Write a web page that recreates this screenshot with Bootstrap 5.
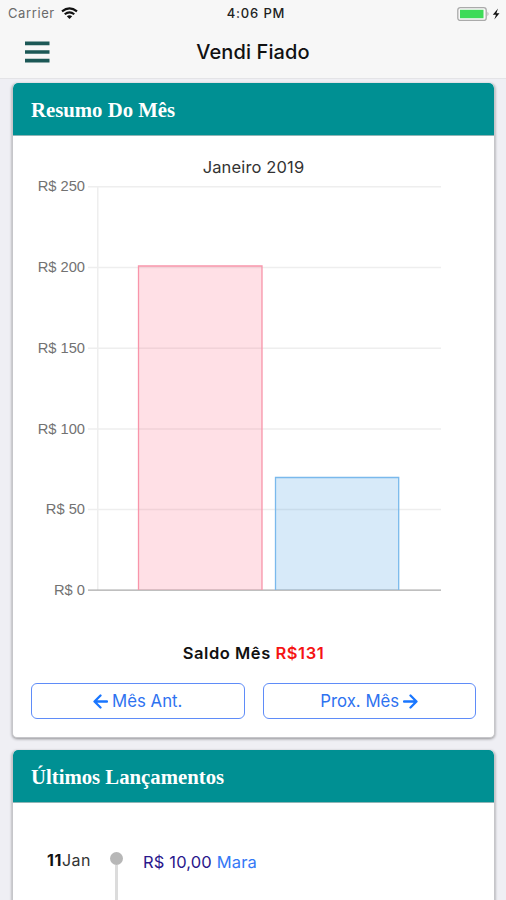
<!DOCTYPE html>
<html lang="pt-BR">
<head>
<meta charset="utf-8">
<meta name="viewport" content="width=device-width, initial-scale=1">
<title>Vendi Fiado</title>
<link href="https://cdn.jsdelivr.net/npm/bootstrap@5.3.0/dist/css/bootstrap.min.css" rel="stylesheet">
<style>
body{font-family:Inter,"Liberation Sans",sans-serif;background:#efeff4;color:#111;height:900px;overflow:hidden}
main{height:821px;overflow:hidden}
.app-top{background:#f7f7f7;height:79px;border-bottom:1px solid #e4e4e7}
.status{height:26px;font-size:13px;padding:1px 5px 0 8px;display:grid;grid-template-columns:1fr auto 1fr}
.carrier{color:#6a6a6a;letter-spacing:.6px}
.carrier svg{margin-left:6px}
.clock{font-weight:500;letter-spacing:.85px;color:#222;padding-left:3px}
.title-bar{height:52px;display:grid;grid-template-columns:1fr auto 1fr;padding:0 24px}
.title{font-size:20px;font-weight:500;color:#111;letter-spacing:.1px;margin:0}
.panel{width:483px;margin-left:12px;border:1px solid #c6c6ca;border-top:0;border-radius:5px;box-shadow:0 1px 3px rgba(0,0,0,.4);overflow:hidden}
.panel-title{height:53px;background:#009093;color:#fff;font:bold 20.75px "Liberation Serif",serif;padding:2px 18px 0;border-bottom:1px solid #8fb5b6;border-radius:5px 5px 0 0}
.summary{height:655px;margin-top:4px}
.entries{height:230px;margin-top:12px}
.chart-title{font-size:16.5px;line-height:20px;color:#333;padding-top:21px;letter-spacing:.15px}
.axis{font:14.7px "Liberation Sans",sans-serif;fill:#727272;text-anchor:end}
.balance{font-size:16.5px;font-weight:600;line-height:22px;letter-spacing:.55px;color:#111}
.balance span{color:#f51414}
.months{padding:19px 18px 0;gap:18px}
.btn-month{height:36px;border:1px solid #5f8cf8;border-radius:6px;color:#2e72f0;font-size:16.8px;padding:0;gap:4px;line-height:1}
.entry{padding:37px 0 0 34px;font-size:16.5px}
.day{width:63px;font-size:16px;letter-spacing:.55px;line-height:41px;color:#333}
.day b{color:#111}
.track{width:13px;height:90px;padding-top:12px}
.dot{width:13px;height:13px;border-radius:50%;background:#b7b7b7;flex:none}
.rail{width:3px;background:#dcdcdc}
.amount{color:#2a178c;line-height:45px;margin-left:20px;letter-spacing:.15px}
.amount a{color:#3478f6}
</style>
<script src="https://cdn.jsdelivr.net/npm/bootstrap@5.3.0/dist/js/bootstrap.bundle.min.js"></script>
</head>
<body>
<header class="app-top">
  <div class="status align-items-center">
    <div class="carrier d-flex align-items-center">Carrier
      <svg width="17" height="13" viewBox="0 0 17 13" fill="none" stroke="#111" stroke-width="2.1"><path d="M1 4.4Q8.5-1.8 16 4.4M3.7 7.3Q8.5 3.4 13.3 7.3"/><path d="M5.8 9.2Q8.5 7.2 11.2 9.2L8.5 12Z" fill="#111" stroke="none"/></svg>
    </div>
    <div class="clock">4:06 PM</div>
    <div class="d-flex justify-content-end align-items-center">
      <svg width="44" height="16" viewBox="0 0 44 16"><rect x=".8" y="1.6" width="28.4" height="12.8" rx="2.5" fill="#f7f7f7" stroke="#aaa" stroke-width="1.3"/><rect x="3" y="3.8" width="23.5" height="8.4" fill="#3edb58"/><path d="M30.5 5.8q2 2.2 0 4.4z" fill="#aaa"/><path d="M41 2.5L35.8 8.8H39L37.3 13.5L42.5 7.2H39.4Z" fill="#111"/></svg>
    </div>
  </div>
  <nav class="title-bar align-items-center">
    <svg width="26" height="24" viewBox="0 0 26 24" stroke="#1c5856" stroke-width="3.6"><path d="M1 3.4H25.5M1 12H25.5M1 20.6H25.5"/></svg>
    <h1 class="title">Vendi Fiado</h1>
  </nav>
</header>
<main class="d-flow-root">
  <div class="pt-1">
  <section class="card panel summary mt-0">
    <h2 class="panel-title d-flex align-items-center mb-0 flex-shrink-0">Resumo Do Mês</h2>
    <div class="chart-title text-center">Janeiro 2019</div>
    <svg class="d-block" width="481" height="465" viewBox="13 177 481 465" role="img" aria-label="Janeiro 2019">
      <g stroke="#eee" stroke-width="1.5"><path d="M88 186.7H441M88 267.5H441M88 348.3H441M88 428.9H441M88 509.5H441M97.8 186V590"/></g>
      <path d="M88 590.2H441" stroke="#aaa" stroke-width="1.3"/>
      <g fill="rgba(255,99,132,.2)" stroke="#f895aa" stroke-width="1.3"><path d="M138.5 590V266H262V590"/></g>
      <g fill="rgba(54,150,225,.2)" stroke="#7ab9ec" stroke-width="1.3"><path d="M275.5 590V477.5H398.7V590"/></g>
      <g class="axis"><text x="85" y="191.3">R$ 250</text><text x="85" y="272.3">R$ 200</text><text x="85" y="353">R$ 150</text><text x="85" y="433.6">R$ 100</text><text x="85" y="514.4">R$ 50</text><text x="85" y="595">R$ 0</text></g>
    </svg>
    <div class="balance text-center">Saldo Mês <span>R$131</span></div>
    <div class="months d-flex">
      <button class="btn btn-month flex-fill w-50 d-flex align-items-center justify-content-center"><svg width="15" height="15" viewBox="0 0 15 15" fill="none" stroke="#1976ff" stroke-width="2.3" stroke-linecap="round" stroke-linejoin="round"><path d="M7.5 1.5L1.5 7.5L7.5 13.5M2 7.5H14"/></svg><span>Mês Ant.</span></button>
      <button class="btn btn-month flex-fill w-50 d-flex align-items-center justify-content-center"><span>Prox. Mês</span><svg width="15" height="15" viewBox="0 0 15 15" fill="none" stroke="#1976ff" stroke-width="2.3" stroke-linecap="round" stroke-linejoin="round"><path d="M7.5 1.5L13.5 7.5L7.5 13.5M13 7.5H1"/></svg></button>
    </div>
  </section>
  <section class="card panel entries">
    <h2 class="panel-title d-flex align-items-center mb-0 flex-shrink-0">Últimos Lançamentos</h2>
    <div class="entry d-flex">
      <div class="day"><b>11</b>Jan</div>
      <div class="track d-flex flex-column align-items-center"><div class="dot"></div><div class="rail flex-grow-1"></div></div>
      <div class="amount">R$ 10,00 <a class="text-decoration-none" href="#">Mara</a></div>
    </div>
  </section>
  </div>
</main>
</body>
</html>
